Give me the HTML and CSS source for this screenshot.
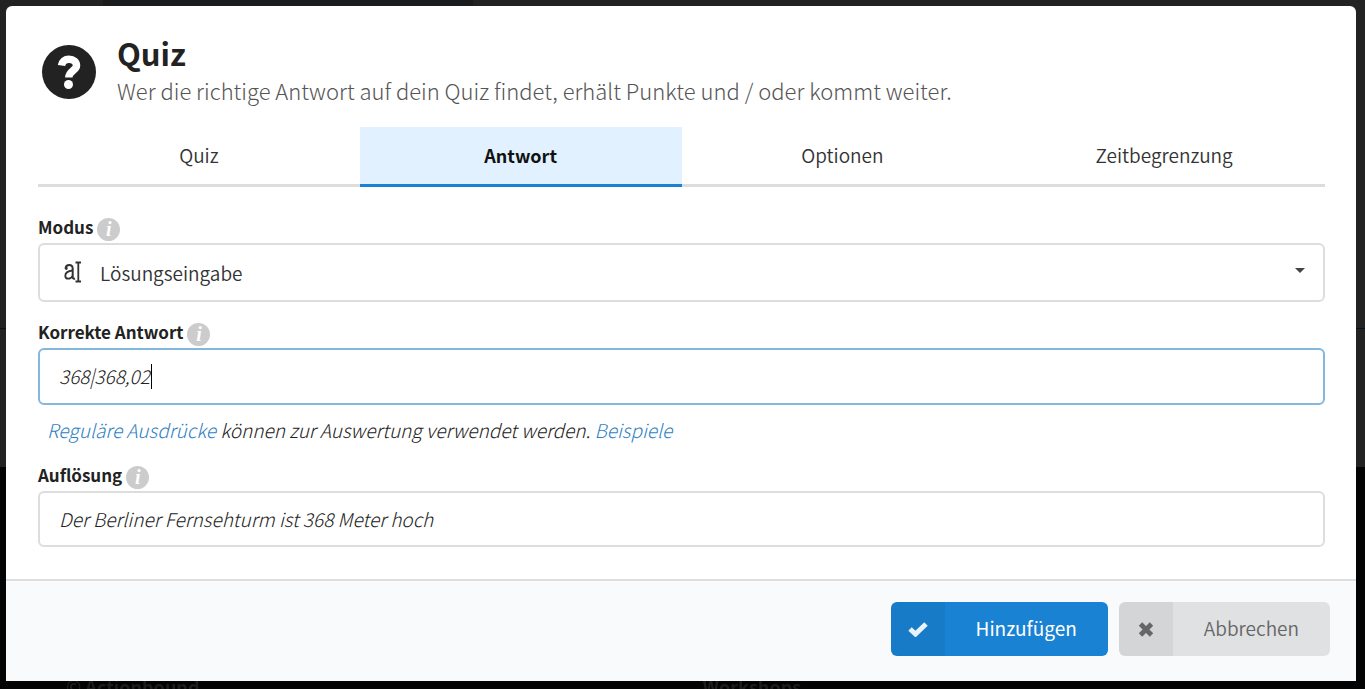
FILE: index.html
```html
<!DOCTYPE html>
<html lang="de">
<head>
    <meta charset="UTF-8">
    <meta name="viewport" content="width=device-width, initial-scale=1.0">
    <title>Quiz</title>
    <link rel="stylesheet" href="styles.css">
</head>
<body>
    <div class="page">
        <div class="page-nav"><span class="page-nav-active"></span></div>
        <div class="page-main"></div>
        <div class="page-footer">
            <span>© Actionbound</span>
            <span>Workshops</span>
        </div>
    </div>

    <form class="modal" role="dialog" aria-labelledby="modal-title">
        <div class="modal-body">
            <header class="modal-header">
                <svg class="header-icon" viewBox="0 0 54 54" aria-hidden="true">
                    <circle cx="27" cy="27" r="27" fill="#222"/>
                    <path d="M19.500 20.500C20 16.500 23 14.200 27 14.200C31.500 14.200 34.500 17 34.500 20.500C34.500 25.500 26.800 26 26.800 32.500" fill="none" stroke="#fff" stroke-width="7.500"/>
                    <circle cx="26.500" cy="39.500" r="4.500" fill="#fff"/>
                </svg>
                <div>
                    <h1 id="modal-title">Quiz</h1>
                    <p class="subtitle">Wer die richtige Antwort auf dein Quiz findet, erhält Punkte und / oder kommt weiter.</p>
                </div>
            </header>

            <nav class="tabs">
                <a href="#quiz">Quiz</a>
                <a href="#antwort" class="active">Antwort</a>
                <a href="#optionen">Optionen</a>
                <a href="#zeit">Zeitbegrenzung</a>
            </nav>

            <div class="field">
                <div class="label-row">
                    <label for="modus">Modus</label>
                    <span class="info">i</span>
                </div>
                <div class="control">
                    <select id="modus">
                        <option>Lösungseingabe</option>
                    </select>
                    <svg class="mode-icon" viewBox="0 0 18 22" aria-hidden="true">
                        <path d="M1.500 7.500C1.800 4.800 3.500 4 5.300 4C7.800 4 8.700 5.300 8.700 7.800V16C8.700 17.500 9.500 18 11 17.500" fill="none" stroke="#333" stroke-width="2"/>
                        <path d="M8.500 9.500C4 10 1.300 11.500 1.300 14.700C1.300 18.800 6.500 18.500 8.700 15" fill="none" stroke="#333" stroke-width="1.800"/>
                        <circle cx="2.300" cy="7.500" r="1.400" fill="#333"/>
                        <path d="M11.500 1.500H17M14.300 1.500V20.500M11.500 20.500H17" fill="none" stroke="#333" stroke-width="1.800"/>
                    </svg>
                    <svg class="arrow" viewBox="0 0 10 5" aria-hidden="true"><path d="M0 0H10L5 5Z" fill="#444"/></svg>
                </div>
            </div>

            <div class="field">
                <div class="label-row">
                    <label for="antwort">Korrekte Antwort</label>
                    <span class="info">i</span>
                </div>
                <div class="control">
                    <input type="text" id="antwort" class="focused" value="368|368,02">
                    <span class="caret"></span>
                </div>
                <p class="help"><a href="#regex">Reguläre Ausdrücke</a> können zur Auswertung verwendet werden. <a href="#beispiele">Beispiele</a></p>
            </div>

            <div class="field">
                <div class="label-row">
                    <label for="aufloesung">Auflösung</label>
                    <span class="info">i</span>
                </div>
                <input type="text" id="aufloesung" value="Der Berliner Fernsehturm ist 368 Meter hoch">
            </div>
        </div>

        <footer class="modal-footer">
            <button type="button" class="btn btn-primary">
                <span class="btn-icon">
                    <svg viewBox="0 0 20 16" aria-hidden="true"><path d="M2 8L7.500 13L18 3" fill="none" stroke="currentColor" stroke-width="5"/></svg>
                </span>
                <span class="btn-text">Hinzufügen</span>
            </button>
            <button type="button" class="btn btn-cancel">
                <span class="btn-icon">
                    <svg viewBox="0 0 20 16" aria-hidden="true"><path d="M4.500 3L15.500 14M15.500 3L4.500 14" fill="none" stroke="currentColor" stroke-width="4.800"/></svg>
                </span>
                <span class="btn-text">Abbrechen</span>
            </button>
        </footer>
    </form>
</body>
</html>
```
FILE: styles.css
```css
* {
    box-sizing: border-box;
}

body {
    margin: 0;
    background: #030303;
    color: #222;
    font-family: "Source Sans Pro", "Noto Sans CJK JP", "Noto Sans", sans-serif;
    font-size: 19px;
    font-weight: 350;
    line-height: 28px;
    overflow: hidden;
}

h1,
p {
    margin: 0;
}

/* dimmed page behind the dialog */
.page {
    position: fixed;
    inset: 0;
    display: flex;
    flex-direction: column;
    z-index: -1;
}

.page-nav {
    background: #222;
    padding-left: 103px;
}

.page-nav-active {
    display: block;
    width: 370px;
    height: 6px;
    background: #1a1b1c;
}

.page-main {
    height: 461px;
    background: linear-gradient(#222 322px, #04121f 322px, #04121f 323px, #222 323px);
}

.page-footer {
    flex: 1;
    display: grid;
    grid-template-columns: 1fr 1fr;
    align-items: end;
    padding: 0 26px 0 66px;
    color: #1c1c1c;
    font-weight: bold;
    font-size: 18px;
    line-height: 6px;
}

.modal {
    margin: 6px 9px 8px 6px;
    background: #fff;
    border-radius: 6px 6px 0 0;
}

.modal-body {
    padding: 32px 31px 32px 32px;
}

.modal-header {
    display: flex;
    gap: 21px;
    padding-left: 4px;
    height: 89px;
}

.header-icon {
    width: 54px;
    height: 54px;
    margin-top: 7px;
}

h1 {
    font-size: 31px;
    line-height: 30px;
    font-weight: bold;
}

.subtitle {
    color: #555;
    font-size: 22px;
    font-weight: 300;
    line-height: 44px;
}

.tabs {
    display: flex;
    margin-bottom: 26px;
}

.tabs a {
    flex: 1;
    height: 60px;
    border-bottom: 3px solid #ddd;
    line-height: 56px;
    text-align: center;
    color: #333;
    text-decoration: none;
}

.tabs .active {
    background: #e1f1ff;
    border-color: #1a82d2;
    font-size: 18px;
    font-weight: bold;
    color: #111;
}

.field {
    margin-bottom: 16px;
}

.field:last-child {
    margin-bottom: 0;
}

.label-row {
    display: flex;
    gap: 4px;
    height: 30px;
}

label {
    font-size: 17px;
    font-weight: bold;
}

.info {
    width: 23px;
    height: 23px;
    margin-top: 5px;
    border-radius: 50%;
    background: #ccc;
    color: #fff;
    font: italic bold 20px/23px "Liberation Serif", serif;
    text-align: center;
}

.control {
    position: relative;
}

input,
select {
    display: block;
    width: 100%;
    height: 56px;
    padding: 0 19px 2px;
    border: 2px solid #ddd;
    border-radius: 6px;
    background: #fff;
    color: #222;
    font: inherit;
    outline: none;
}

input {
    font-weight: 300;
    font-style: italic;
}

select {
    appearance: none;
    height: 59px;
    padding: 0 60px;
    color: #333;
}

.focused {
    height: 57px;
    border-color: #84b7dd;
}

.mode-icon {
    position: absolute;
    left: 26px;
    top: 18px;
    width: 18px;
    height: 22px;
}

.arrow {
    position: absolute;
    right: 20px;
    top: 25px;
    width: 10px;
    height: 5px;
}

.caret {
    position: absolute;
    left: 113px;
    top: 16px;
    width: 1px;
    height: 25px;
    background: #000;
}

.help {
    padding: 11px 9px 1px;
    font-weight: 300;
    font-style: italic;
}

.help a {
    color: #2f7fc4;
    text-decoration: none;
}

.modal-footer {
    display: flex;
    justify-content: flex-end;
    gap: 11px;
    padding: 21px 26px 25px;
    border-top: 2px solid #ddd;
    background: #f9fafc;
}

.btn {
    display: flex;
    height: 54px;
    padding: 0;
    border: 0;
    border-radius: 6px;
    overflow: hidden;
    font: inherit;
    line-height: 52px;
    cursor: pointer;
}

.btn-icon {
    display: flex;
    align-items: center;
    justify-content: center;
    width: 54px;
    height: 54px;
    background: rgba(0, 0, 0, 0.05);
}

.btn-icon svg {
    width: 20px;
    height: 16px;
}

.btn-text {
    padding: 0 31px;
}

.btn-primary {
    background: #1a82d2;
    color: #fff;
    font-weight: 400;
}

.btn-primary svg {
    opacity: 0.9;
}

.btn-cancel {
    background: #e0e1e3;
    color: #666;
}
```
